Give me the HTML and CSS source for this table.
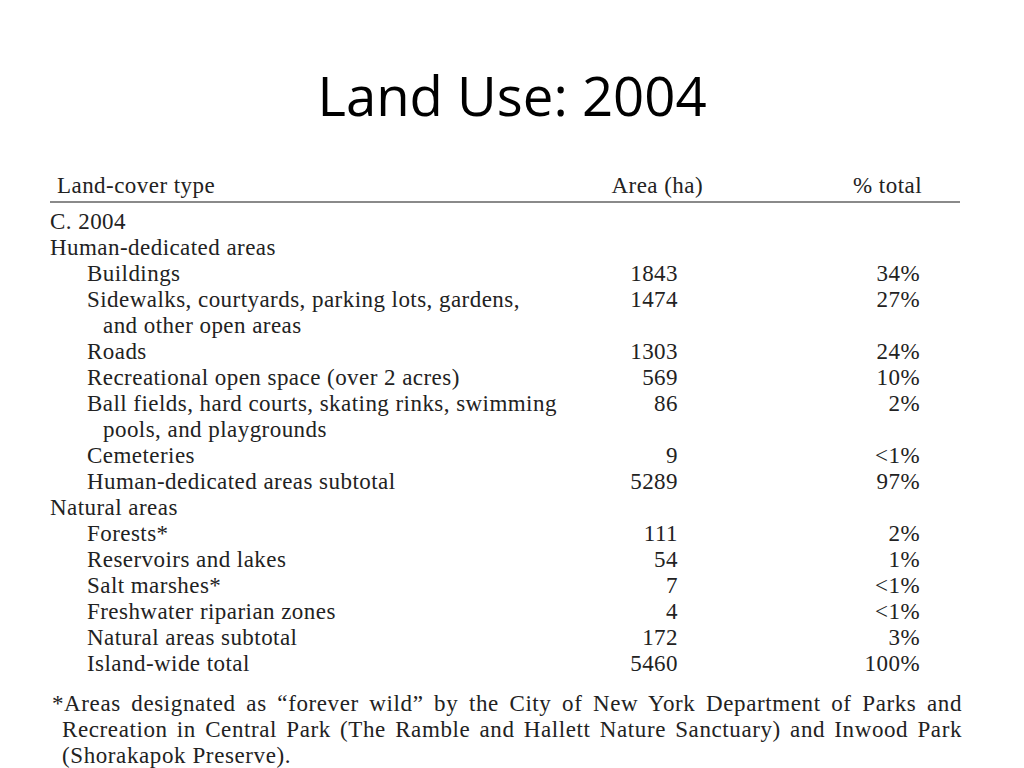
FILE: index.html
```html
<!DOCTYPE html>
<html lang="en">
<head>
<meta charset="utf-8">
<title>Land Use: 2004</title>
<link rel="stylesheet" href="styles.css">
</head>
<body>
<div class="slide">
  <h1 class="title">Land Use: 2004</h1>
  <div class="table">
    <div class="row head">
      <div class="label l-head">Land-cover type</div>
      <div class="num area-head">Area (ha)</div>
      <div class="num pct-head">% total</div>
    </div>
    <div class="body">
      <div class="row"><div class="label">C. 2004</div><div class="num"></div><div class="num"></div></div>
      <div class="row"><div class="label">Human-dedicated areas</div><div class="num"></div><div class="num"></div></div>
      <div class="row"><div class="label sub">Buildings</div><div class="num">1843</div><div class="num">34%</div></div>
      <div class="row"><div class="label sub">Sidewalks, courtyards, parking lots, gardens,<br>and other open areas</div><div class="num">1474</div><div class="num">27%</div></div>
      <div class="row"><div class="label sub">Roads</div><div class="num">1303</div><div class="num">24%</div></div>
      <div class="row"><div class="label sub">Recreational open space (over 2 acres)</div><div class="num">569</div><div class="num">10%</div></div>
      <div class="row"><div class="label sub">Ball fields, hard courts, skating rinks, swimming<br>pools, and playgrounds</div><div class="num">86</div><div class="num">2%</div></div>
      <div class="row"><div class="label sub">Cemeteries</div><div class="num">9</div><div class="num">&lt;1%</div></div>
      <div class="row"><div class="label sub">Human-dedicated areas subtotal</div><div class="num">5289</div><div class="num">97%</div></div>
      <div class="row"><div class="label">Natural areas</div><div class="num"></div><div class="num"></div></div>
      <div class="row"><div class="label sub">Forests*</div><div class="num">111</div><div class="num">2%</div></div>
      <div class="row"><div class="label sub">Reservoirs and lakes</div><div class="num">54</div><div class="num">1%</div></div>
      <div class="row"><div class="label sub">Salt marshes*</div><div class="num">7</div><div class="num">&lt;1%</div></div>
      <div class="row"><div class="label sub">Freshwater riparian zones</div><div class="num">4</div><div class="num">&lt;1%</div></div>
      <div class="row"><div class="label sub">Natural areas subtotal</div><div class="num">172</div><div class="num">3%</div></div>
      <div class="row"><div class="label sub">Island-wide total</div><div class="num">5460</div><div class="num">100%</div></div>
    </div>
  </div>
  <div class="note">
    <span class="line first">*Areas designated as “forever wild” by the City of New York Department of Parks and</span>
    <span class="line">Recreation in Central Park (The Ramble and Hallett Nature Sanctuary) and Inwood Park</span>
    <span class="line last">(Shorakapok Preserve).</span>
  </div>
</div>
</body>
</html>
```

FILE: styles.css
```css
html, body {
  margin: 0;
  padding: 0;
  background: #ffffff;
}

.slide {
  width: 1024px;
  height: 768px;
  overflow: hidden;
  background: #ffffff;
}

.title {
  margin: 0;
  padding-top: 55px;
  height: 80px;
  line-height: 80px;
  text-align: center;
  font-family: "Open Sans", "Liberation Sans", sans-serif;
  font-weight: 400;
  font-size: 54.5px;
  color: #000000;
}

.table {
  margin: 38px 0 0 50px;
  width: 910px;
  font-family: "Liberation Serif", "Times New Roman", serif;
  font-size: 23px;
  letter-spacing: 0.45px;
  line-height: 26px;
  color: #222222;
}

.row {
  display: grid;
  grid-template-columns: 560px 68px 242px;
  align-items: start;
}

.head {
  padding-bottom: 2px;
  border-bottom: 2px solid #8a8a8a;
}

.body {
  padding-top: 6px;
}

.label {
  white-space: nowrap;
}

.l-head {
  padding-left: 7px;
}

.sub {
  padding-left: 53px;
  text-indent: -16px;
}

.num {
  text-align: right;
  white-space: nowrap;
}

.area-head {
  margin-right: -25px;
}

.pct-head {
  margin-right: -2px;
}

.note {
  margin: 14px 0 0 52px;
  width: 910px;
  padding-left: 10px;
  box-sizing: border-box;
  font-family: "Liberation Serif", "Times New Roman", serif;
  font-size: 23px;
  letter-spacing: 0.6px;
  line-height: 26px;
  color: #222222;
}

.line {
  display: block;
  white-space: nowrap;
  text-align: justify;
  text-align-last: justify;
}

.line.first {
  text-indent: -10px;
}

.line.last {
  text-align-last: left;
}
```
